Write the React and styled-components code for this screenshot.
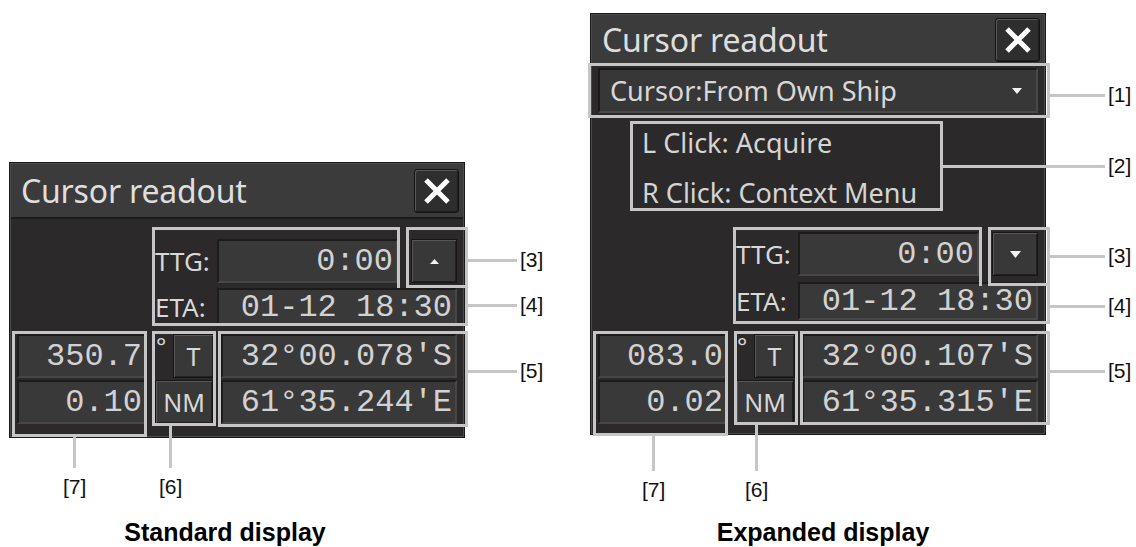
import React from 'react';
import styled, { createGlobalStyle } from 'styled-components';

const SANS = `"Noto Sans", "DejaVu Sans", sans-serif`;
const MONO = `"Liberation Mono", "DejaVu Sans Mono", monospace`;
const NOTE = '#c6c6c6';

const GlobalStyle = createGlobalStyle`
  html, body {
    margin: 0;
    padding: 0;
    background: #ffffff;
  }
  body {
    width: 1136px;
    height: 547px;
    overflow: hidden;
    font-family: "Liberation Sans", Arial, sans-serif;
  }
`;

const Page = styled.div`
  display: flex;
  width: 1136px;
  height: 547px;
`;

const Figure = styled.div`
  position: relative;
  display: flex;
  flex-direction: column;
  box-sizing: border-box;
  width: ${(p) => p.$width}px;
  height: 547px;
  padding-top: ${(p) => p.$top}px;
  padding-left: ${(p) => p.$left}px;
`;

const Caption = styled.div`
  margin-top: auto;
  margin-bottom: 2px;
  width: ${(p) => p.$width}px;
  text-align: center;
  font-family: "Liberation Sans", Arial, sans-serif;
  font-weight: bold;
  font-size: 25px;
  line-height: 25px;
  color: #000;
`;

/* ---------- the readout window ---------- */

const Window = styled.div`
  width: 454px;
  box-sizing: border-box;
  background: #2b2929;
  border: 1px solid #4d4c4c;
  box-shadow: 0 0 0 1px #1a1919;
  font-family: ${SANS};
  color: #d8d8d8;
`;

const TitleBar = styled.div`
  display: flex;
  align-items: center;
  justify-content: space-between;
  height: ${(p) => p.$h}px;
  padding: 0 4px 0 10px;
  background: #3c3b3b;
  border-bottom: 2px solid #1d1c1c;
`;

const Title = styled.div`
  font-size: 32px;
  line-height: 1;
  color: #dedede;
  letter-spacing: -0.2px;
`;

const CloseButton = styled.div`
  display: flex;
  align-items: center;
  justify-content: center;
  width: 45px;
  height: 44px;
  box-sizing: border-box;
  background: #2f2e2e;
  border: 1px solid #151414;
  border-radius: 3px;
  box-shadow: inset 1px 1px 0 #5a5959, inset -1px -1px 0 #1f1e1e;
`;

const Body = styled.div`
  display: flex;
  flex-direction: column;
  padding: ${(p) => p.$pt}px 6px ${(p) => p.$pb}px 6px;
`;

const Dropdown = styled.div`
  display: flex;
  align-items: center;
  justify-content: space-between;
  height: 45px;
  box-sizing: border-box;
  padding: 0 14px 0 10px;
  background: #383737;
  border: 2px solid;
  border-color: #1c1b1b #4a4949 #4a4949 #1c1b1b;
  font-size: 27px;
  color: #d8d8d8;
`;

const Hints = styled.div`
  display: flex;
  flex-direction: column;
  margin-top: 5px;
  padding-left: 44px;
`;

const HintLine = styled.div`
  height: 50px;
  line-height: 50px;
  font-size: 27px;
  color: #d4d4d4;
`;

const Row = styled.div`
  display: flex;
  align-items: stretch;
  height: ${(p) => p.$h || 44}px;
  margin-top: ${(p) => p.$mt || 0}px;
  padding-left: ${(p) => p.$indent || 0}px;
`;

const FieldLabel = styled.div`
  width: 62px;
  flex: none;
  display: flex;
  align-items: center;
  font-size: 26px;
  color: #d8d8d8;
`;

const Field = styled.div`
  display: flex;
  align-items: center;
  justify-content: flex-end;
  box-sizing: border-box;
  ${(p) => (p.$w ? `width: ${p.$w}px; flex: none;` : 'flex: 1;')}
  padding-right: 3px;
  background: #3a3939;
  border: 2px solid;
  border-color: #1d1c1c #484747 #484747 #1d1c1c;
  font-family: ${MONO};
  font-feature-settings: "zero" 1;
  font-size: 32px;
  color: #d2d2d2;
  white-space: pre;
  overflow: hidden;
`;

const PushButton = styled.div`
  display: flex;
  align-items: center;
  justify-content: center;
  box-sizing: border-box;
  width: ${(p) => p.$w}px;
  flex: none;
  margin-left: ${(p) => p.$ml || 0}px;
  background: #393838;
  border: 1px solid #171616;
  box-shadow: inset 1px 1px 0 #575656, inset -1px -1px 0 #222121;
  font-size: 25px;
  color: #d8d8d8;
`;

const UnitCell = styled.div`
  display: flex;
  width: 58px;
  flex: none;
  margin: 0 8px;
`;

const Degree = styled.div`
  width: 17px;
  flex: none;
  font-size: 24px;
  line-height: 24px;
  color: #d8d8d8;
  padding-left: 1px;
`;

/* ---------- annotation overlay ---------- */

const Outline = styled.div`
  position: absolute;
  left: ${(p) => p.$x}px;
  top: ${(p) => p.$y}px;
  width: ${(p) => p.$w}px;
  height: ${(p) => p.$h}px;
  box-sizing: border-box;
  border: 3px solid ${NOTE};
  ${(p) => (p.$open ? `border-${p.$open}-width: 0;` : '')}
  pointer-events: none;
`;

/* a leader line with its number; sideways callouts run right, lower ones run down */
const Callout = styled.div`
  position: absolute;
  left: ${(p) => p.$x}px;
  top: ${(p) => p.$y}px;
  display: flex;
  flex-direction: ${(p) => (p.$down ? 'column' : 'row')};
  align-items: ${(p) => (p.$down ? 'center' : 'center')};
  gap: ${(p) => (p.$down ? 8 : 3)}px;
`;

const Line = styled.div`
  flex: none;
  background: ${NOTE};
  width: ${(p) => (p.$down ? 3 : p.$len)}px;
  height: ${(p) => (p.$down ? p.$len : 3)}px;
`;

const Tag = styled.div`
  font-family: "Liberation Sans", Arial, sans-serif;
  font-size: 21px;
  line-height: 21px;
  color: #111;
  margin-top: ${(p) => (p.$down ? 0 : -1)}px;
`;

function Note({ x, y, len, down, children }) {
  return (
    <Callout $x={x} $y={y} $down={down}>
      <Line $len={len} $down={down} />
      <Tag $down={down}>{children}</Tag>
    </Callout>
  );
}

function CloseIcon() {
  return (
    <svg width="28" height="28" viewBox="0 0 28 28">
      <path d="M3 3 L25 25 M25 3 L3 25" stroke="#ffffff" strokeWidth="5" />
    </svg>
  );
}

function Triangle({ down, size = 9 }) {
  const h = Math.round(size * 0.6);
  return (
    <svg width={size} height={h} viewBox={`0 0 ${size} ${h}`}>
      <path
        d={down ? `M0 0 L${size} 0 L${size / 2} ${h} Z` : `M0 ${h} L${size} ${h} L${size / 2} 0 Z`}
        fill="#f2f2f2"
      />
    </svg>
  );
}

function Readout({ expanded, heading, speed, lat, lon }) {
  return (
    <Window>
      <TitleBar $h={expanded ? 49 : 53}>
        <Title>Cursor readout</Title>
        <CloseButton>
          <CloseIcon />
        </CloseButton>
      </TitleBar>
      <Body $pt={expanded ? 2 : 20} $pb={expanded ? 9 : 12}>
        {expanded && (
          <>
            <Dropdown>
              <span>Cursor:From Own Ship</span>
              <Triangle down size={10} />
            </Dropdown>
            <Hints>
              <HintLine>L Click: Acquire</HintLine>
              <HintLine>R Click: Context Menu</HintLine>
            </Hints>
          </>
        )}
        <Row $indent={138} $mt={expanded ? 14 : 0}>
          <FieldLabel>TTG:</FieldLabel>
          <Field $w={181}>0:00</Field>
          <PushButton $w={46} $ml={13}>
            <Triangle down={expanded} size={expanded ? 11 : 9} />
          </PushButton>
        </Row>
        <Row $indent={138} $h={38} $mt={expanded ? 6 : 5}>
          <FieldLabel>ETA:</FieldLabel>
          <Field>01-12 18:30</Field>
        </Row>
        <Row $mt={expanded ? 14 : 8}>
          <Field $w={130}>{heading}</Field>
          <UnitCell>
            <Degree>°</Degree>
            <PushButton $w={41}>T</PushButton>
          </UnitCell>
          <Field>{lat}</Field>
        </Row>
        <Row $mt={2}>
          <Field $w={130}>{speed}</Field>
          <UnitCell>
            <PushButton $w={58}>NM</PushButton>
          </UnitCell>
          <Field>{lon}</Field>
        </Row>
      </Body>
    </Window>
  );
}

export default function App() {
  return (
    <>
      <GlobalStyle />
      <Page>
        <Figure $width={580} $top={163} $left={10}>
          <Readout heading="350.7" speed="0.10" lat="32°00.078'S" lon="61°35.244'E" />
          <Caption $width={430}>Standard display</Caption>

          <Outline $x={152} $y={227} $w={248} $h={61} $open="bottom" />
          <Outline $x={152} $y={285} $w={316} $h={41} $open="top" />
          <Outline $x={406} $y={227} $w={62} $h={61} />
          <Outline $x={218} $y={331} $w={250} $h={96} />
          <Outline $x={152} $y={331} $w={64} $h={95} />
          <Outline $x={12} $y={331} $w={135} $h={106} />
          <Note x={468} y={250} len={49}>[3]</Note>
          <Note x={468} y={295} len={49}>[4]</Note>
          <Note x={468} y={361} len={49}>[5]</Note>
          <Note x={63} y={437} len={31} down>[7]</Note>
          <Note x={159} y={426} len={42} down>[6]</Note>
        </Figure>

        <Figure $width={556} $top={14} $left={11}>
          <Readout expanded heading="083.0" speed="0.02" lat="32°00.107'S" lon="61°35.315'E" />
          <Caption $width={464}>Expanded display</Caption>

          <Outline $x={8} $y={63} $w={462} $h={55} />
          <Outline $x={50} $y={121} $w={313} $h={90} />
          <Outline $x={153} $y={227} $w={249} $h={59} $open="bottom" />
          <Outline $x={153} $y={283} $w={317} $h={41} $open="top" />
          <Outline $x={408} $y={227} $w={62} $h={59} />
          <Outline $x={220} $y={331} $w={250} $h={94} />
          <Outline $x={154} $y={331} $w={64} $h={94} />
          <Outline $x={13} $y={331} $w={135} $h={105} />
          <Note x={470} y={85} len={55}>[1]</Note>
          <Note x={363} y={156} len={162}>[2]</Note>
          <Note x={470} y={246} len={55}>[3]</Note>
          <Note x={470} y={296} len={55}>[4]</Note>
          <Note x={470} y={361} len={55}>[5]</Note>
          <Note x={62} y={436} len={35} down>[7]</Note>
          <Note x={165} y={425} len={46} down>[6]</Note>
        </Figure>
      </Page>
    </>
  );
}
